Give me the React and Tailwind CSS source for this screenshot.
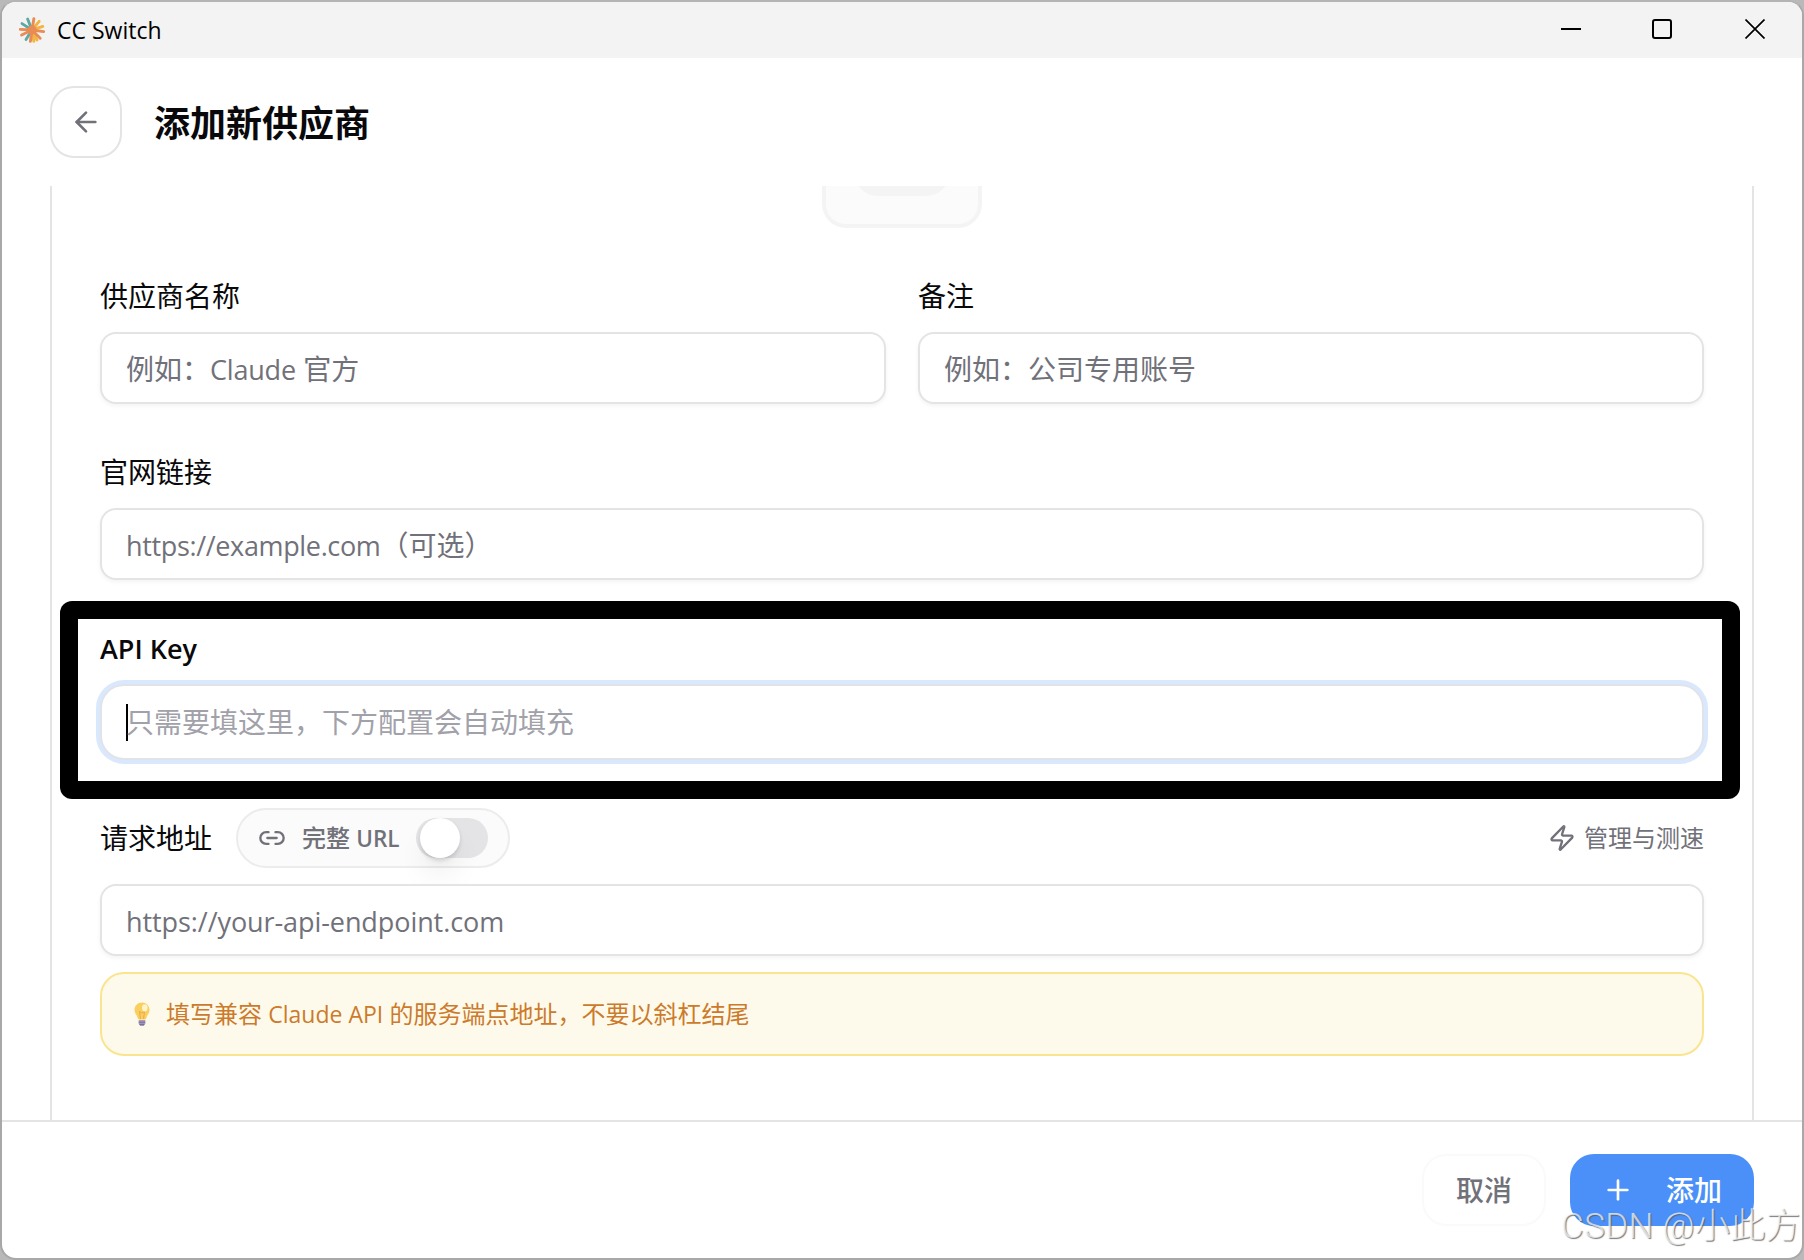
import React, { useState } from 'react';
import { ArrowLeft, Link2, Plus, Zap } from 'lucide-react';

const rays = [
  { x: -4.4, y: -11, color: '#5fa9a5' },
  { x: -10, y: -6.4, color: '#5fa9a5' },
  { x: -6, y: 9.6, color: '#5fa9a5' },
  { x: 7.2, y: -8.6, color: '#f2b544' },
  { x: 10.8, y: -3.6, color: '#f2b544' },
  { x: 5, y: 10, color: '#f2b544' },
  { x: 1.8, y: 11.2, color: '#f2b544' },
  { x: 1.9, y: -11.4, color: '#e98b54' },
  { x: -11.8, y: -0.6, color: '#e98b54' },
  { x: -10.4, y: 5, color: '#e98b54' },
  { x: -1.6, y: 11.4, color: '#e98b54' },
  { x: 8.2, y: 8.2, color: '#e98b54' },
  { x: 11.6, y: 1.6, color: '#e98b54' },
];

const AppLogo = () => (
  <svg width="26" height="26" viewBox="-13 -13 26 26" strokeWidth="2.9" strokeLinecap="round">
    {rays.map((r, i) => (
      <line key={i} x1="0" y1="0" x2={r.x} y2={r.y} stroke={r.color} />
    ))}
    <circle r="4.6" fill="#e98b54" />
  </svg>
);

const Bulb = () => (
  <svg width="16" height="24" viewBox="0 0 16 24" fill="none">
    <path d="M8 .5C3.6 .5 .5 3.8 .5 8c0 3.4 2.4 5 3 7.6 .3 1.1 .6 1.9 1.5 1.9h6c.9 0 1.2-.8 1.5-1.9 .6-2.6 3-4.2 3-7.6C15.5 3.8 12.4 .5 8 .5Z" fill="#f9cf5f" />
    <path d="M6.5 17 5.5 9.5 8 11l2.5-1.5L9.5 17" stroke="#edaa43" strokeWidth="1" />
    <ellipse cx="10.8" cy="5.8" rx="2.8" ry="3.6" fill="#fff3c9" />
    <path d="M4.7 18h6.6v3.5L9.8 24H6.2l-1.5-2.5Z" fill="#a89bbd" />
    <path d="M4.7 20.2h6.6M5.4 22.4h5" stroke="#766b98" />
  </svg>
);

const TitleBar = () => (
  <div className="flex h-14 shrink-0 items-center justify-between bg-[#f3f3f3] pl-[17px] pr-[37px]">
    <div className="flex items-center gap-3">
      <AppLogo />
      <span className="text-[23px] leading-8 text-black">CC Switch</span>
    </div>
    <div className="flex items-center pb-0.5 text-black">
      <svg width="20" height="20" viewBox="0 0 20 20"><path d="M0 10h20" stroke="currentColor" strokeWidth="2" /></svg>
      <svg className="ml-[71px]" width="20" height="20" viewBox="0 0 20 20" fill="none"><rect x="1" y="1" width="18" height="18" rx="2" stroke="currentColor" strokeWidth="2" /></svg>
      <svg className="ml-[73px]" width="20" height="20" viewBox="0 0 20 20"><path d="M0.5 0.5l19 19M19.5 0.5l-19 19" stroke="currentColor" strokeWidth="1.7" /></svg>
    </div>
  </div>
);

const Label = ({ children }) => (
  <label className="block h-10 text-[28px] leading-10 text-[#09090b]">{children}</label>
);

const Field = ({ children }) => (
  <div className="flex h-[72px] items-center whitespace-pre rounded-2xl border-2 border-[#e4e4e4] bg-white px-6 pt-0.5 text-[28px] text-[#71717a] shadow-[0_2px_4px_rgba(0,0,0,0.05)]">
    {children}
  </div>
);

const FullUrlSwitch = () => {
  const [checked, setChecked] = useState(false);

  return (
    <div className="flex h-[60px] w-[274px] items-center rounded-full border-2 border-[#ececec] bg-[#fbfbfb] pl-5 text-[#71717a]">
      <Link2 size={28} />
      <span className="ml-4 w-[114px] whitespace-nowrap text-2xl font-medium">
        完整 <span className="text-[22.5px] font-semibold">URL</span>
      </span>
      <button
        onClick={() => setChecked(!checked)}
        className={`flex h-10 w-[72px] items-center rounded-full px-1 ${checked ? 'justify-end bg-blue-500' : 'bg-[#e4e4e7]'}`}
      >
        <span className="h-10 w-10 rounded-full bg-white shadow-[0_20px_30px_-6px_rgba(0,0,0,0.1),0_8px_12px_-8px_rgba(0,0,0,0.1),0_2px_4px_rgba(0,0,0,0.12)]" />
      </button>
    </div>
  );
};

const App = () => {
  return (
    <div className="relative h-[1260px] w-[1804px] overflow-hidden bg-[#b9b9b9] font-['Open_Sans','Noto_Sans_CJK_SC',sans-serif]">
      <div className="flex h-full flex-col overflow-hidden rounded-2xl border-2 border-[#a8a8a8] border-t-[#b4b4b4] bg-white">
        <TitleBar />

        <header className="flex h-32 shrink-0 items-center px-12">
          <button className="flex h-[72px] w-[72px] items-center justify-center rounded-3xl border-2 border-[#e4e4e4] text-[#71717a]">
            <ArrowLeft size={32} />
          </button>
          <h1 className="ml-8 pt-[3px] text-4xl font-bold text-[#09090b]">添加新供应商</h1>
        </header>

        <main className="min-h-0 flex-1 overflow-hidden px-12">
          <div className="h-full border-x-2 border-[#e4e4e4] px-12">
            <div className="mx-auto flex h-[42px] w-40 flex-col items-center rounded-b-3xl border-4 border-t-0 border-[#f4f4f4] bg-[#fbfbfb]">
              <div className="h-2.5 w-24 overflow-hidden">
                <div className="-mt-[86px] h-24 w-24 rounded-3xl bg-[#f4f4f4]" />
              </div>
            </div>

            <div className="mt-12 flex flex-col gap-12">
              <div className="grid grid-cols-2 gap-8">
                <div className="flex flex-col gap-4">
                  <Label>供应商名称</Label>
                  <Field>例如：<span className="pt-[3px] text-[27px] tracking-[-0.2px]">Claude</span> 官方</Field>
                </div>
                <div className="flex flex-col gap-4">
                  <Label>备注</Label>
                  <Field>例如：公司专用账号</Field>
                </div>
              </div>

              <div className="flex flex-col gap-4">
                <Label>官网链接</Label>
                <Field><span className="pt-[3px] text-[27px] tracking-[-0.35px]">https://example.com</span>（可选）</Field>
              </div>

              {/* highlighted: the only field that has to be filled in */}
              <div className="relative flex flex-col gap-4">
                <div className="pointer-events-none absolute -left-10 -right-9 -top-[27px] h-[198px] rounded-xl bg-black" />
                <div className="absolute -left-[22px] -right-[18px] -top-[9px] h-[162px] bg-white" />
                <div className="relative"><Label><span className="text-[27px] font-semibold">API Key</span></Label></div>
                <div className="relative flex h-[76px] items-center rounded-[24px] border-2 border-[#e0e3e9] bg-white px-6 text-[28px] text-[#a1a1aa] ring-4 ring-[#dae8fd]">
                  <span className="h-[37px] w-0.5 bg-black" />
                  <span className="-ml-0.5">只需要填这里，下方配置会自动填充</span>
                </div>
              </div>

              <div className="flex flex-col gap-4">
                <div className="flex h-[60px] items-center">
                  <Label>请求地址</Label>
                  <div className="ml-6"><FullUrlSwitch /></div>
                  <button className="ml-auto flex items-center gap-2 text-2xl text-[#71717a]">
                    <Zap size={28} />
                    管理与测速
                  </button>
                </div>
                <Field><span className="pt-[3px] text-[27px] tracking-[-0.08px]">https://your-api-endpoint.com</span></Field>
                <div className="flex h-[84px] items-center rounded-3xl border-2 border-[#f9e48f] bg-[#fefaeb] pl-8 text-2xl text-[#cc7a2b]">
                  <Bulb />
                  <p className="ml-4">填写兼容 <span className="text-[23px]">Claude API</span> 的服务端点地址，不要以斜杠结尾</p>
                </div>
              </div>
            </div>
          </div>
        </main>

        <footer className="flex h-[138px] shrink-0 items-start justify-end gap-6 border-t-2 border-[#e4e4e4] px-12 pt-8">
          <button className="h-[72px] w-[124px] rounded-3xl border-2 border-[#fafafa] text-[28px] font-medium text-[#71717a]">取消</button>
          <button className="flex h-[72px] w-[184px] items-center rounded-3xl bg-[#4a90f8] pl-8 text-[28px] font-medium text-white">
            <Plus size={32} />
            <span className="ml-8 leading-7">添加</span>
          </button>
        </footer>
      </div>

      <span className="absolute bottom-[15px] right-[3px] whitespace-nowrap font-['Roboto','Noto_Sans_CJK_SC',sans-serif] text-[35px] font-light leading-9 tracking-[0.35px] text-white/70 [text-shadow:1px_1px_1px_rgba(90,90,90,0.8)]">
        CSDN @小此方
      </span>
    </div>
  );
};

export default App;
